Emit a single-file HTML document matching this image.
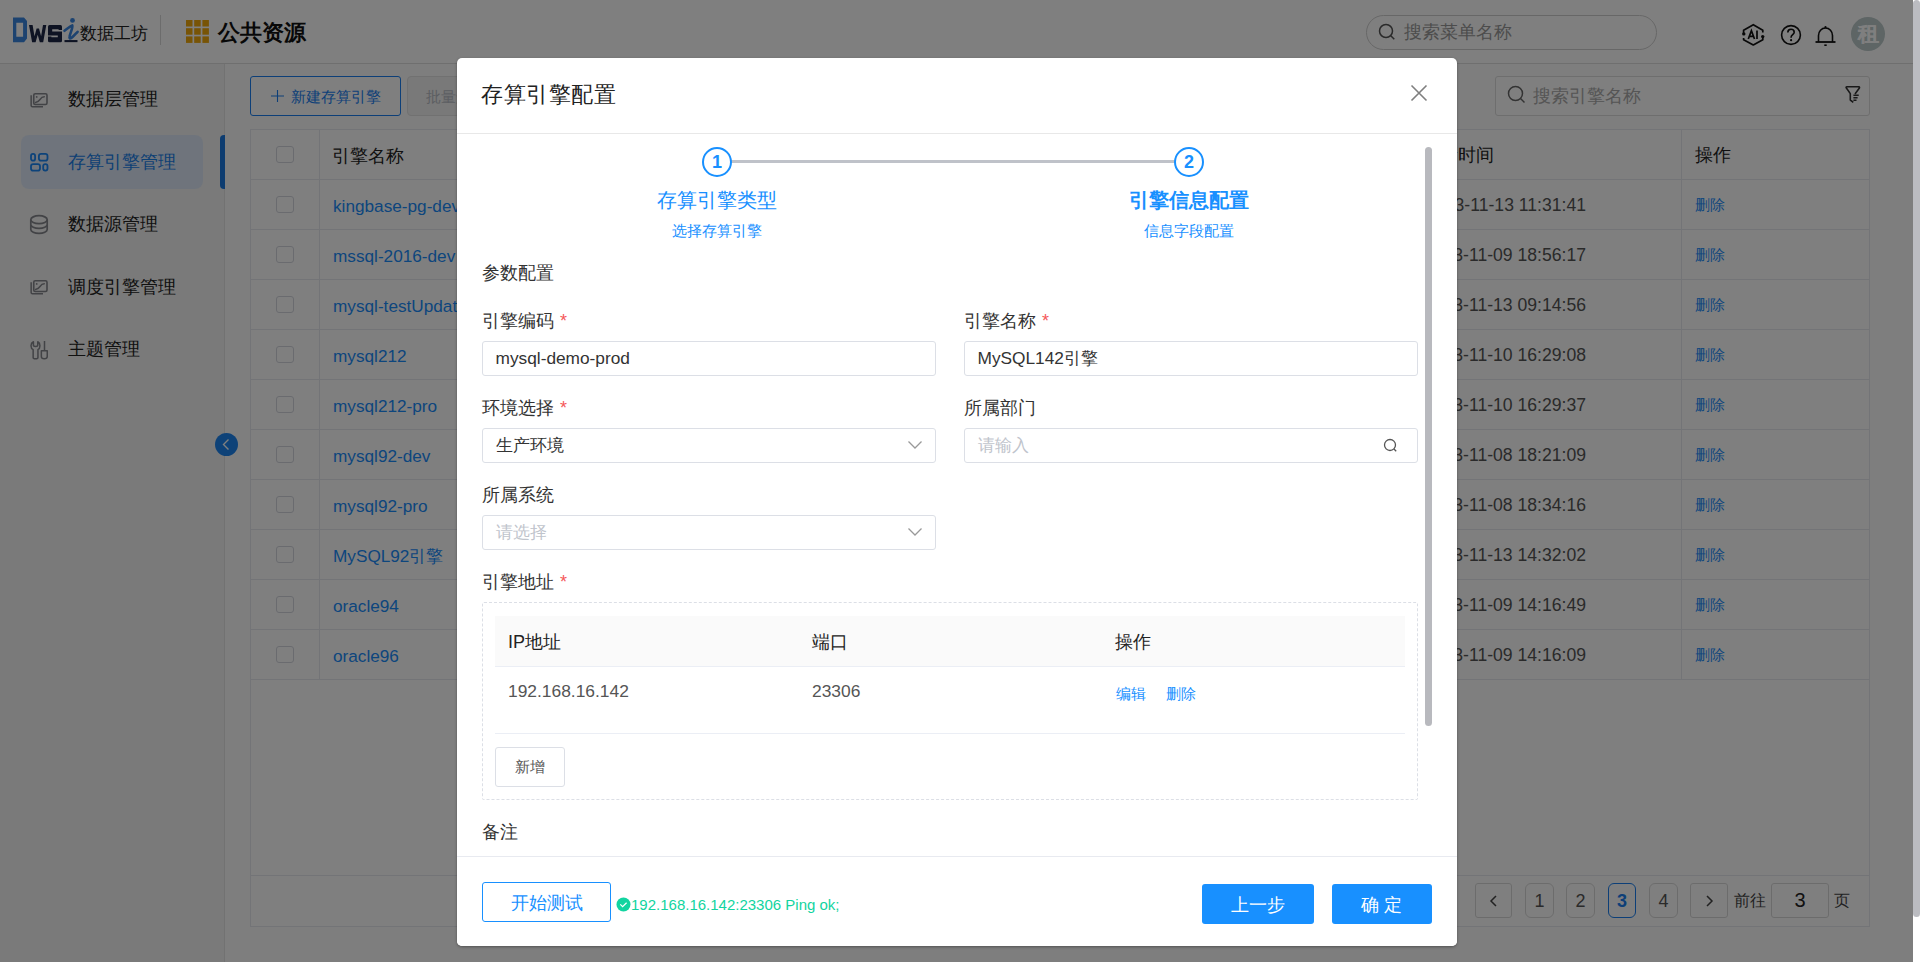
<!DOCTYPE html>
<html><head><meta charset="utf-8">
<style>
*{box-sizing:border-box;margin:0;padding:0}
html,body{width:1920px;height:962px;overflow:hidden;background:#fff}
body{font-family:"Liberation Sans",sans-serif;color:#333;position:relative}
.a{position:absolute;white-space:nowrap}
#page{position:absolute;left:0;top:0;width:1913px;height:962px;background:#fdfdfd;overflow:hidden}
#hdr{position:absolute;left:0;top:0;width:1913px;height:64px;background:#fff;border-bottom:1px solid #dedede}
#side{position:absolute;left:0;top:64px;width:225px;height:898px;background:#f4f4f4;border-right:1px solid #e4e4e4}
.mi{position:absolute;left:68px;font-size:17.5px;line-height:20px;color:#222;white-space:nowrap}
.tbl{position:absolute;left:250px;top:129px;width:1620px;height:798px;background:#fff;border:1px solid #e6e8ee}
.row{position:absolute;left:0;width:1618px;height:50px;border-bottom:1px solid #e6e8ee}
.c1{position:absolute;left:68px;top:0;width:1px;height:50px;background:#e6e8ee}
.c2{position:absolute;left:1430px;top:0;width:1px;height:50px;background:#e6e8ee}
.cb{position:absolute;left:25px;top:16px;width:18px;height:17px;border:1px solid #d4d7de;border-radius:3px;background:#fff}
.nm{position:absolute;left:82px;top:16px;font-size:17.2px;line-height:20px;color:#1a8cfa;white-space:nowrap}
.tm{position:absolute;right:283px;top:14.5px;font-size:17.6px;line-height:20px;color:#555;white-space:nowrap}
.op{position:absolute;left:1444px;top:16px;font-size:15px;line-height:18px;color:#1a8cfa;white-space:nowrap}
.pg{position:absolute;top:883px;height:35px;border:1px solid #d9d9d9;border-radius:6px;background:#fff;font-size:18px;line-height:34px;text-align:center;color:#555}
#mask{position:absolute;left:0;top:0;width:1913px;height:962px;background:rgba(0,0,0,.5)}
#psb{position:absolute;left:1913px;top:0;width:7px;height:962px;background:#fff}
#psb:after{content:"";position:absolute;left:0;top:0;width:7px;height:917px;background:#bbbcc1;border-radius:4px}
#modal{position:absolute;left:457px;top:58px;width:1000px;height:888px;background:#fff;border-radius:5px;box-shadow:0 1px 3px rgba(0,0,0,.35)}
.lbl{position:absolute;font-size:18px;line-height:20px;color:#333;white-space:nowrap}
.req{color:#f5585a;margin-left:6px}
.inp{position:absolute;width:454px;height:35px;border:1px solid #dcdfe6;border-radius:3px;background:#fff;font-size:17.3px;line-height:33px;padding-left:12.5px;color:#333;white-space:nowrap}
.ph{color:#c0c4cc}
.blue{color:#1890ff}

</style></head><body>
<div id="page">
<div id="hdr"></div>
<div id="side"></div>
<svg class="a" style="left:0;top:0" width="80" height="50" viewBox="0 0 80 50">
 <path d="M13 17.5h11l3 3.5v17.5l-3 3.8H13z M16.3 22.7v14.1h6.8V22.7z" fill="#3a86e0" fill-rule="evenodd"/>
 <path d="M29 25h3.6l1.9 11.3 2.1-7.8h2.4l2.1 7.8 1.9-11.3h3.3l-3.1 17.2h-3.4l-2.1-7.4-2.1 7.4h-3.5z" fill="#1c2647"/>
 <rect x="48" y="25" width="14" height="17.3" rx="1.5" fill="#1c2647"/><path d="M52.2 29.2h6.4v.8H62v1.5h-9.8z M57.8 37.3h-6.4v-.8H48V35.5h9.8z" fill="#fff"/>
 <circle cx="72.5" cy="20.4" r="2.4" fill="#3a86e0"/>
 <path d="M64.5 30.8c2.5-1.8 5.5-4.5 7.8-5.4.6 3-2.5 8.5-2.8 11.5-.2 1.5.6 1.8 1.6 1.2 2-1.2 4.3-4 6.5-6.3" fill="none" stroke="#3a86e0" stroke-width="2.6" stroke-linecap="round" stroke-linejoin="round"/>
 <path d="M64.5 41.1h13" stroke="#1c2647" stroke-width="2.1"/>
</svg>
<div class="a" style="left:80px;top:24px;font-size:17px;line-height:20px;color:#222">数据工坊</div>
<div class="a" style="left:160px;top:15px;width:1px;height:30px;background:#d8d8d8"></div>
<svg class="a" style="left:186px;top:20px" width="23" height="23" viewBox="0 0 23 23">
 <g fill="#f0a90c">
 <rect x="0" y="0" width="6.5" height="6.5"/><rect x="8.2" y="0" width="6.5" height="6.5"/><rect x="16.4" y="0" width="6.5" height="6.5"/>
 <rect x="0" y="8.2" width="6.5" height="6.5"/><rect x="8.2" y="8.2" width="6.5" height="6.5"/><rect x="16.4" y="8.2" width="6.5" height="6.5"/>
 <rect x="0" y="16.4" width="6.5" height="6.5"/><rect x="8.2" y="16.4" width="6.5" height="6.5"/><rect x="16.4" y="16.4" width="6.5" height="6.5"/>
 </g>
</svg>
<div class="a" style="left:218px;top:21px;font-size:22px;line-height:24px;font-weight:bold;color:#111">公共资源</div>
<div class="a" style="left:1366px;top:15px;width:291px;height:35px;border:1px solid #cfcfcf;border-radius:18px;background:#fff"></div>
<svg class="a" style="left:1378px;top:23px" width="19" height="18" viewBox="0 0 19 18"><circle cx="8" cy="8" r="6.5" fill="none" stroke="#555" stroke-width="1.5"/><path d="M12.8 12.8l3.5 3.5" stroke="#555" stroke-width="1.5"/></svg>
<div class="a" style="left:1404px;top:22px;font-size:18px;line-height:20px;color:#999">搜索菜单名称</div>
<svg class="a" style="left:1738px;top:20px" width="30" height="30" viewBox="0 0 30 30">
 <path d="M5.6 13.9V10.2L15.3 4.7l9.5 5.5v2.3M24.8 16.6v3.2L15.3 25l-9.7-5.2v-1.7" fill="none" stroke="#111" stroke-width="1.7" stroke-linejoin="round"/>
 <circle cx="5.8" cy="13.9" r="1.7" fill="#111"/><circle cx="24.7" cy="16.6" r="1.7" fill="#111"/>
 <path d="M10.3 19L13.4 10.6 16.5 19M11.3 16.3h4.2M19 10.6V19" fill="none" stroke="#111" stroke-width="1.7"/>
</svg>
<svg class="a" style="left:1780px;top:24px" width="22" height="22" viewBox="0 0 22 22">
 <circle cx="11" cy="11" r="9.4" fill="none" stroke="#111" stroke-width="1.6"/>
 <path d="M7.8 8.6c0-2 1.4-3.3 3.2-3.3s3.2 1.2 3.2 2.9c0 2.3-3.1 2.5-3.1 5v.6" fill="none" stroke="#111" stroke-width="1.6"/>
 <circle cx="11.1" cy="16.2" r="1.1" fill="#111"/>
</svg>
<svg class="a" style="left:1814px;top:25px" width="23" height="22" viewBox="0 0 23 22">
 <path d="M4.5 17V10.5c0-4.2 3-7.5 7-7.5s7 3.3 7 7.5V17" fill="none" stroke="#111" stroke-width="1.6"/>
 <path d="M1.5 17h20" stroke="#111" stroke-width="1.8"/>
 <circle cx="11.5" cy="2.2" r="1.1" fill="#111"/>
 <path d="M10.3 20.2h2.4" stroke="#111" stroke-width="1.6"/>
</svg>
<div class="a" style="left:1851px;top:17px;width:34px;height:34px;border-radius:50%;background:#bccaca;color:#fff;font-size:21px;line-height:34px;text-align:center;font-weight:900;-webkit-text-stroke:0.2px #fff">租</div>

<div class="a" style="left:21px;top:135px;width:182px;height:54px;border-radius:8px;background:#dfe9f8"></div>
<div class="a" style="left:220px;top:135px;width:5px;height:54px;border-radius:4px 0 0 4px;background:#1a78e0"></div>
<svg class="a" style="left:24px;top:85px" width="32" height="30" viewBox="0 0 32 30">
 <rect x="9.75" y="8.75" width="13.25" height="10.8" rx="1.5" fill="none" stroke="#85868c" stroke-width="1.6"/>
 <path d="M7.15 10.3v10.2c0 .8.5 1.3 1.3 1.3H19" fill="none" stroke="#85868c" stroke-width="1.5"/>
 <circle cx="12.7" cy="11.9" r="0.9" fill="#85868c"/>
 <path d="M11.5 17.5c2.5-.5 3.5-1.5 4.5-3s2-2.7 4.3-2.7" fill="none" stroke="#85868c" stroke-width="1.4" stroke-linecap="round"/>
</svg>
<div class="mi" style="top:89px">数据层管理</div>
<svg class="a" style="left:24px;top:146px" width="32" height="30" viewBox="0 0 32 30">
 <g fill="none" stroke="#1a86f5" stroke-width="1.8"><rect x="7" y="7.9" width="4.1" height="6.8" rx="2"/><rect x="14.9" y="7.9" width="8.6" height="6.8" rx="2.2"/><rect x="7" y="18.1" width="9" height="6.5" rx="2.2"/><rect x="19.2" y="18.1" width="4.3" height="6.5" rx="2"/></g>
</svg>
<div class="mi" style="top:152px;color:#1a80e8">存算引擎管理</div>
<svg class="a" style="left:29px;top:214px" width="20" height="22" viewBox="0 0 20 22">
 <g fill="none" stroke="#85868c" stroke-width="1.7"><ellipse cx="10" cy="5.7" rx="8.2" ry="4"/><path d="M1.8 5.7v9.75a8.2 4 0 0 0 16.4 0V5.7M1.8 10.45a8.2 4 0 0 0 16.4 0"/></g>
</svg>
<div class="mi" style="top:214px">数据源管理</div>
<svg class="a" style="left:24px;top:272px" width="32" height="30" viewBox="0 0 32 30">
 <rect x="9.75" y="8.75" width="13.25" height="10.8" rx="1.5" fill="none" stroke="#85868c" stroke-width="1.6"/>
 <path d="M7.15 10.3v10.2c0 .8.5 1.3 1.3 1.3H19" fill="none" stroke="#85868c" stroke-width="1.5"/>
 <circle cx="12.7" cy="11.9" r="0.9" fill="#85868c"/>
 <path d="M11.5 17.5c2.5-.5 3.5-1.5 4.5-3s2-2.7 4.3-2.7" fill="none" stroke="#85868c" stroke-width="1.4" stroke-linecap="round"/>
</svg>
<div class="mi" style="top:277px">调度引擎管理</div>
<svg class="a" style="left:24px;top:334px" width="32" height="30" viewBox="0 0 32 30">
 <g fill="none" stroke="#85868c" stroke-width="1.5" stroke-linejoin="round">
 <path d="M9.4 7.75C7.9 8.5 7 9.9 7 11.7c0 1.9.9 3.3 2.15 3.9v7.9c0 1 1.05 1.35 2.4 1.35s2.4-.35 2.4-1.35v-7.9c1.15-.6 2-2 2-3.9 0-1.8-.85-3.2-2.2-3.95v3.55c0 .7-.95 1.2-2.2 1.2s-2.15-.5-2.15-1.2z"/>
 <path d="M20.5 7v9.75"/>
 <path d="M17.35 16.75h5.9v5.85c0 1.4-1.25 2.25-2.95 2.25s-2.95-.85-2.95-2.25z"/>
 </g>
</svg>
<div class="mi" style="top:339px">主题管理</div>
<div class="a" style="left:215px;top:433px;width:23px;height:23px;border-radius:50%;background:#1c84f0"></div>
<svg class="a" style="left:215px;top:433px" width="23" height="23" viewBox="0 0 23 23"><path d="M13.5 6.5l-5 5 5 5" fill="none" stroke="#fff" stroke-width="1.4"/></svg>

<div class="a" style="left:250px;top:76px;width:151px;height:40px;border:1.5px solid #1a7ff0;border-radius:3px;background:#fff"></div>
<svg class="a" style="left:271px;top:90px" width="13" height="12" viewBox="0 0 13 12"><path d="M6.5 0v12M0 6h13" stroke="#1a7ff0" stroke-width="1.1"/></svg>
<div class="a" style="left:291px;top:88px;font-size:15px;line-height:17px;color:#1a7ff0">新建存算引擎</div>
<div class="a" style="left:407px;top:76px;width:120px;height:40px;border:1px solid #e2e2e2;border-radius:4px;background:#f2f2f2"></div>
<div class="a" style="left:426px;top:88px;font-size:15px;line-height:17px;color:#b8bcc4">批量删除</div>
<div class="a" style="left:1495px;top:76px;width:375px;height:40px;border:1px solid #dcdcdc;border-radius:3px;background:#fff"></div>
<svg class="a" style="left:1507px;top:85px" width="20" height="20" viewBox="0 0 20 20"><circle cx="8.5" cy="8.5" r="7" fill="none" stroke="#666" stroke-width="1.5"/><path d="M13.5 13.5l4 4" stroke="#666" stroke-width="1.5"/></svg>
<div class="a" style="left:1533px;top:86px;font-size:18px;line-height:20px;color:#aaa">搜索引擎名称</div>
<svg class="a" style="left:1836px;top:80px" width="34" height="30" viewBox="0 0 34 30"><path d="M19 14l4.4-6c.6-1.3-.6-1.3-.6-1.3H11c-1.3 0-.8 1.1-.8 1.1l4.1 5.8V20l3 2.3" fill="none" stroke="#333" stroke-width="1.6" stroke-linejoin="round"/><path d="M17.4 15.3h5.3M17.4 17.8h4.2M17.4 20.3h3.1" stroke="#333" stroke-width="1.4"/></svg>
<div class="tbl">
<div class="row" style="top:0"><div class="cb"></div><div class="c1"></div><div class="c2"></div><div class="nm" style="color:#222;font-size:17.5px;left:81px">引擎名称</div><div class="a" style="left:1171px;top:15px;font-size:17.5px;line-height:20px;color:#222">更新时间</div><div class="a" style="left:1444px;top:15px;font-size:17.5px;line-height:20px;color:#222">操作</div></div>
<div class="row" style="top:50px"><div class="cb"></div><div class="c1"></div><div class="c2"></div><div class="nm">kingbase-pg-dev</div><div class="tm">2023-11-13 11:31:41</div><div class="op">删除</div></div>
<div class="row" style="top:100px"><div class="cb"></div><div class="c1"></div><div class="c2"></div><div class="nm">mssql-2016-dev</div><div class="tm">2023-11-09 18:56:17</div><div class="op">删除</div></div>
<div class="row" style="top:150px"><div class="cb"></div><div class="c1"></div><div class="c2"></div><div class="nm">mysql-testUpdate</div><div class="tm">2023-11-13 09:14:56</div><div class="op">删除</div></div>
<div class="row" style="top:200px"><div class="cb"></div><div class="c1"></div><div class="c2"></div><div class="nm">mysql212</div><div class="tm">2023-11-10 16:29:08</div><div class="op">删除</div></div>
<div class="row" style="top:250px"><div class="cb"></div><div class="c1"></div><div class="c2"></div><div class="nm">mysql212-pro</div><div class="tm">2023-11-10 16:29:37</div><div class="op">删除</div></div>
<div class="row" style="top:300px"><div class="cb"></div><div class="c1"></div><div class="c2"></div><div class="nm">mysql92-dev</div><div class="tm">2023-11-08 18:21:09</div><div class="op">删除</div></div>
<div class="row" style="top:350px"><div class="cb"></div><div class="c1"></div><div class="c2"></div><div class="nm">mysql92-pro</div><div class="tm">2023-11-08 18:34:16</div><div class="op">删除</div></div>
<div class="row" style="top:400px"><div class="cb"></div><div class="c1"></div><div class="c2"></div><div class="nm">MySQL92引擎</div><div class="tm">2023-11-13 14:32:02</div><div class="op">删除</div></div>
<div class="row" style="top:450px"><div class="cb"></div><div class="c1"></div><div class="c2"></div><div class="nm">oracle94</div><div class="tm">2023-11-09 14:16:49</div><div class="op">删除</div></div>
<div class="row" style="top:500px"><div class="cb"></div><div class="c1"></div><div class="c2"></div><div class="nm">oracle96</div><div class="tm">2023-11-09 14:16:09</div><div class="op">删除</div></div>

<div class="a" style="left:0;top:745px;width:1618px;height:1px;background:#e6e8ee"></div>
</div>
<div class="pg" style="left:1475px;width:37px;border-radius:3px"><svg width="12" height="14" viewBox="0 0 12 14" style="margin-top:10px"><path d="M8 2L3 7l5 5" fill="none" stroke="#444" stroke-width="1.5"/></svg></div>
<div class="pg" style="left:1525px;width:29px">1</div>
<div class="pg" style="left:1566px;width:29px">2</div>
<div class="pg" style="left:1608px;width:28px;border-color:#1a7ff0;color:#1a7ff0;font-weight:bold">3</div>
<div class="pg" style="left:1649px;width:29px">4</div>
<div class="pg" style="left:1690px;width:38px;border-radius:3px"><svg width="12" height="14" viewBox="0 0 12 14" style="margin-top:10px"><path d="M4 2l5 5-5 5" fill="none" stroke="#444" stroke-width="1.5"/></svg></div>
<div class="a" style="left:1734px;top:892px;font-size:16px;line-height:18px;color:#444">前往</div>
<div class="a" style="left:1771px;top:883px;width:58px;height:35px;border:1px solid #d9d9d9;border-radius:3px;background:#fff;font-size:20px;line-height:33px;text-align:center;color:#222">3</div>
<div class="a" style="left:1834px;top:892px;font-size:16px;line-height:18px;color:#444">页</div>

<div id="mask"></div>
</div>
<div id="psb"></div>
<div id="modal"></div>
<div class="a" style="left:481px;top:82px;font-size:22px;line-height:25px;letter-spacing:0.6px;color:#222">存算引擎配置</div>
<svg class="a" style="left:1409px;top:83px" width="20" height="20" viewBox="0 0 20 20"><path d="M2.5 2.5l15 15M17.5 2.5l-15 15" stroke="#7f7f7f" stroke-width="1.6"/></svg>
<div class="a" style="left:457px;top:133px;width:1000px;height:1px;background:#e8e8e8"></div>
<div class="a" style="left:731px;top:160px;width:444px;height:3px;background:#bfc2c9"></div>
<div class="a" style="left:702px;top:147px;width:30px;height:30px;border:2px solid #1890ff;border-radius:50%;background:#fff;color:#1890ff;font-weight:bold;font-size:18px;line-height:26px;text-align:center">1</div>
<div class="a" style="left:1174px;top:147px;width:30px;height:30px;border:2px solid #1890ff;border-radius:50%;background:#fff;color:#1890ff;font-weight:bold;font-size:18px;line-height:26px;text-align:center">2</div>
<div class="a" style="left:657px;top:189px;font-size:20px;line-height:23px;color:#1890ff">存算引擎类型</div>
<div class="a" style="left:672px;top:222px;font-size:15px;line-height:17px;color:#1890ff">选择存算引擎</div>
<div class="a" style="left:1129px;top:189px;font-size:20px;line-height:23px;color:#1890ff;font-weight:bold">引擎信息配置</div>
<div class="a" style="left:1144px;top:222px;font-size:15px;line-height:17px;color:#1890ff">信息字段配置</div>
<div class="lbl" style="left:482px;top:263px">参数配置</div>
<div class="lbl" style="left:482px;top:311px">引擎编码<span class="req">*</span></div>
<div class="inp" style="left:482px;top:341px">mysql-demo-prod</div>
<div class="lbl" style="left:964px;top:311px">引擎名称<span class="req">*</span></div>
<div class="inp" style="left:964px;top:341px">MySQL142引擎</div>
<div class="lbl" style="left:482px;top:398px">环境选择<span class="req">*</span></div>
<div class="inp" style="left:482px;top:428px">生产环境</div>
<svg class="a" style="left:906px;top:438px" width="18" height="14" viewBox="0 0 18 14"><path d="M2.5 3.5l6.5 6.5 6.5-6.5" fill="none" stroke="#999" stroke-width="1.3"/></svg>
<div class="lbl" style="left:964px;top:398px">所属部门</div>
<div class="inp ph" style="left:964px;top:428px">请输入</div>
<svg class="a" style="left:1382px;top:437px" width="17" height="17" viewBox="0 0 17 17"><circle cx="8" cy="8" r="5.5" fill="none" stroke="#555" stroke-width="1.3"/><path d="M12 12l2.2 2.2" stroke="#555" stroke-width="1.3"/></svg>
<div class="lbl" style="left:482px;top:485px">所属系统</div>
<div class="inp ph" style="left:482px;top:515px">请选择</div>
<svg class="a" style="left:906px;top:525px" width="18" height="14" viewBox="0 0 18 14"><path d="M2.5 3.5l6.5 6.5 6.5-6.5" fill="none" stroke="#999" stroke-width="1.3"/></svg>
<div class="lbl" style="left:482px;top:572px">引擎地址<span class="req">*</span></div>
<div class="a" style="left:482px;top:602px;width:936px;height:198px;border:1px dashed #dcdfe6;border-radius:2px"></div>
<div class="a" style="left:495px;top:616px;width:910px;height:51px;background:#fafafa;border-bottom:1px solid #ebeef5"></div>
<div class="lbl" style="left:508px;top:632px;color:#222">IP地址</div>
<div class="lbl" style="left:812px;top:632px;color:#222">端口</div>
<div class="lbl" style="left:1115px;top:632px;color:#222">操作</div>
<div class="lbl" style="left:508px;top:681px;color:#555;font-size:17.4px">192.168.16.142</div>
<div class="lbl" style="left:812px;top:681px;color:#555;font-size:17.4px">23306</div>
<div class="a" style="left:1116px;top:685px;font-size:15px;line-height:17px;color:#1890ff">编辑</div>
<div class="a" style="left:1166px;top:685px;font-size:15px;line-height:17px;color:#1890ff">删除</div>
<div class="a" style="left:495px;top:733px;width:910px;height:1px;background:#ebeef5"></div>
<div class="a" style="left:495px;top:747px;width:70px;height:40px;border:1px solid #dcdfe6;border-radius:3px;background:#fff;font-size:15px;line-height:38px;text-align:center;color:#555">新增</div>
<div class="lbl" style="left:482px;top:822px">备注</div>
<div class="a" style="left:457px;top:856px;width:1000px;height:90px;background:#fff;border-top:1px solid #e8eaf0;border-radius:0 0 5px 5px"></div>
<div class="a" style="left:1425px;top:147px;width:7px;height:579px;border-radius:4px;background:#b8b9be"></div>
<div class="a" style="left:482px;top:882px;width:129px;height:40px;border:1px solid #1890ff;border-radius:3px;background:#fff;font-size:18px;line-height:40px;text-align:center;color:#1890ff">开始测试</div>
<svg class="a" style="left:616px;top:897px" width="15" height="15" viewBox="0 0 15 15"><circle cx="7.5" cy="7.5" r="7" fill="#12d4a0"/><path d="M4.3 7.4l2.3 2.2 4-3.9" fill="none" stroke="#fff" stroke-width="1.2"/></svg>
<div class="a" style="left:631px;top:896px;font-size:15px;line-height:17px;color:#12d4a0">192.168.16.142:23306 Ping ok;</div>
<div class="a" style="left:1202px;top:884px;width:112px;height:40px;border-radius:3px;background:#1890ff;font-size:18px;line-height:42px;text-align:center;color:#fff">上一步</div>
<div class="a" style="left:1332px;top:884px;width:100px;height:40px;border-radius:3px;background:#1890ff;font-size:18px;line-height:42px;text-align:center;color:#fff">确 定</div>

</body></html>
